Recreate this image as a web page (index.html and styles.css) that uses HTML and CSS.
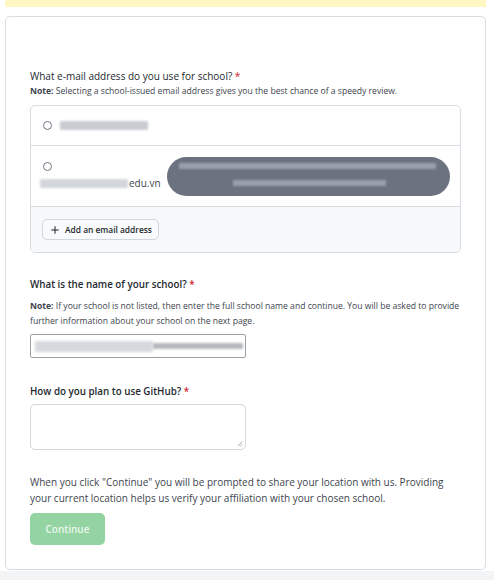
FILE: index.html
```
<!DOCTYPE html>
<html lang="en">
<head>
<meta charset="utf-8">
<title>Education benefits application</title>
<link rel="stylesheet" href="styles.css">
</head>
<body>
<div class="page">
  <div class="banner"></div>
  <div class="card">
    <div class="field">
      <div class="label">What e-mail address do you use for school? <span class="req">*</span></div>
      <p class="note"><b>Note:</b> Selecting a school-issued email address gives you the best chance of a speedy review.</p>
      <div class="email-box">
        <div class="email-row row-one">
          <span class="radio"></span>
          <span class="blur blur-a"></span>
        </div>
        <div class="email-row row-two">
          <div class="addr-col">
            <span class="radio"></span>
            <div class="addr"><span class="blur blur-b"></span><span class="domain">edu.vn</span></div>
          </div>
          <div class="pill">
            <span class="pill-line pill-line-1"></span>
            <span class="pill-line pill-line-2"></span>
          </div>
        </div>
        <div class="email-foot">
          <button class="add-btn" type="button">
            <svg class="plus" viewBox="0 0 16 16" width="10" height="10"><path d="M8 2v12M2 8h12" stroke="#1f2328" stroke-width="1.6" fill="none"/></svg>
            <span>Add an email address</span>
          </button>
        </div>
      </div>
    </div>

    <div class="field field-school">
      <div class="label label-bold">What is the name of your school? <span class="req">*</span></div>
      <p class="note"><b>Note:</b> If your school is not listed, then enter the full school name and continue. You will be asked to provide further information about your school on the next page.</p>
      <div class="input">
        <span class="blur blur-c"></span>
        <span class="blur blur-d"></span>
      </div>
    </div>

    <div class="field field-plan">
      <div class="label label-bold">How do you plan to use GitHub? <span class="req">*</span></div>
      <div class="textarea">
        <svg class="grip" viewBox="0 0 8 8" width="7" height="7"><path d="M7 2L2 7M7 5L5 7" stroke="#888" stroke-width="0.9"/></svg>
      </div>
    </div>

    <p class="info">When you click "Continue" you will be prompted to share your location with us. Providing your current location helps us verify your affiliation with your chosen school.</p>
    <button class="continue" type="button">Continue</button>
  </div>
</div>
</body>
</html>
```
FILE: styles.css
```
* { box-sizing: border-box; }
html, body { margin: 0; padding: 0; }
body {
  font-family: "Open Sans", "Noto Sans", sans-serif;
  color: #1f2328;
  width: 494px;
  height: 580px;
  overflow: hidden;
  background: #f3f4f6;
}
.page {
  padding: 0 8px 0 5px;
  background: #ffffff;
  height: 571px;
}
.banner {
  height: 7px;
  background: #fff8c5;
}
.card {
  margin-top: 9px;
  border: 1px solid #d8dde3;
  border-radius: 5px;
  padding: 51px 24px 24px 24px;
  height: 554px;
  background: #fff;
}
.label {
  font-size: 10px;
  line-height: 16px;
  color: #24292f;
}
.label-bold { font-weight: 600; font-size: 9.8px; }
.req { color: #cf222e; }
.note {
  margin: 0;
  font-size: 8.6px;
  line-height: 15px;
  color: #3d444d;
}
.note b { font-weight: 700; }

.email-box {
  margin-top: 6px;
  border: 1px solid #d8dde3;
  border-radius: 5px;
  overflow: hidden;
}
.email-row {
  border-bottom: 1px solid #d8dde3;
  display: flex;
  align-items: center;
}
.row-one {
  height: 40px;
  padding-left: 12px;
  gap: 8px;
}
.row-two {
  height: 61px;
  padding-left: 9px;
  gap: 6px;
  align-items: center;
}
.addr-col {
  display: flex;
  flex-direction: column;
  gap: 5px;
}
.addr-col .radio { margin-left: 3px; }
.addr {
  display: flex;
  align-items: center;
  font-size: 10px;
  line-height: 14px;
  color: #3d444d;
}
.radio {
  display: block;
  width: 9px;
  height: 9px;
  border: 1px solid #6e7781;
  border-radius: 50%;
  background: #fff;
  flex: none;
}
.blur {
  display: block;
  height: 9px;
  background: #c9ccd1;
  filter: blur(1.2px);
  border-radius: 1px;
}
.blur-a { width: 88px; }
.blur-b { width: 88px; background: #d3d6da; }
.domain { margin-left: 1px; }
.pill {
  width: 283px;
  height: 39px;
  border-radius: 20px;
  background: #6c7280;
  position: relative;
  filter: blur(0.4px);
}
.pill-line {
  position: absolute;
  background: #9aa0aa;
  filter: blur(1px);
}
.pill-line-1 { left: 12px; right: 14px; top: 6px; height: 6px; }
.pill-line-2 { left: 66px; right: 64px; top: 23px; height: 6px; }

.email-foot {
  background: #f6f8fa;
  height: 45px;
  padding: 12px 0 0 11px;
}
.add-btn {
  display: flex;
  align-items: center;
  gap: 5px;
  height: 21px;
  padding: 0 6px 0 7px;
  border: 1px solid #d0d7de;
  border-radius: 5px;
  background: #f9fafb;
  font-family: inherit;
  font-size: 8.4px;
  font-weight: 600;
  color: #24292f;
  cursor: pointer;
}
.plus { display: block; }

.field-school { margin-top: 24px; }
.field-school .note { margin-top: 6px; }
.input {
  margin-top: 5px;
  width: 216px;
  height: 24px;
  border: 1px solid #9aa0a6;
  border-radius: 2px;
  display: flex;
  align-items: center;
  padding-left: 4px;
  gap: 0;
}
.blur-c { width: 118px; height: 11px; background: #d5d8dc; filter: blur(1.6px); }
.blur-d { width: 90px; height: 6px; background: #b5b9bf; filter: blur(1.2px); }

.field-plan { margin-top: 26px; }
.textarea {
  margin-top: 4px;
  width: 216px;
  height: 46px;
  border: 1px solid #d0d7de;
  border-radius: 5px;
  position: relative;
}
.grip { position: absolute; right: 2px; bottom: 2px; }

.info {
  margin: 24px 0 0 0;
  font-size: 10px;
  line-height: 16px;
  color: #3d444d;
}
.continue {
  margin-top: 7px;
  width: 75px;
  height: 32px;
  border: none;
  border-radius: 5px;
  background: #94d3a2;
  color: #eaf7ed;
  font-family: inherit;
  font-size: 10px;
  font-weight: 600;
}
```
